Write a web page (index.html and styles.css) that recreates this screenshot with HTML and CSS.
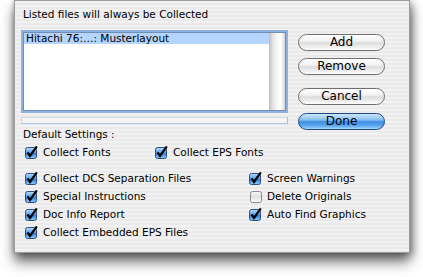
FILE: index.html
```html
<!DOCTYPE html>
<html>
<head>
<meta charset="utf-8">
<link rel="stylesheet" href="styles.css">
</head>
<body>
<div class="window">
  <div class="title">Listed files will always be Collected</div>
  <div class="main">
    <div class="left">
      <div class="list">
        <div class="rows">
          <div class="row selected">Hitachi 76:…: Musterlayout</div>
        </div>
        <div class="scroll"></div>
      </div>
      <div class="hbar"></div>
      <div class="heading">Default Settings :</div>
    </div>
    <div class="buttons">
      <div class="btn">Add</div>
      <div class="btn gap7">Remove</div>
      <div class="btn gap13">Cancel</div>
      <div class="btn default gap8">Done</div>
    </div>
  </div>
  <div class="row1">
    <label class="cb w130"><svg class="box" viewBox="0 0 13 13" width="13" height="13"><defs><linearGradient id="g1" x1="0" y1="0" x2="0" y2="1"><stop offset="0" stop-color="#b9dcfb"/><stop offset="0.45" stop-color="#5ba3ec"/><stop offset="0.55" stop-color="#2e7fd9"/><stop offset="1" stop-color="#8fd0fb"/></linearGradient></defs><rect x="0.5" y="1.5" width="11" height="11" rx="2" fill="url(#g1)" stroke="#2c4f80"/><path d="M2.6 6.4 L5 10 L11.8 0.4" fill="none" stroke="#000" stroke-width="2.2"/></svg>Collect Fonts</label>
    <label class="cb"><svg class="box" viewBox="0 0 13 13" width="13" height="13"><rect x="0.5" y="1.5" width="11" height="11" rx="2" fill="url(#g1)" stroke="#2c4f80"/><path d="M2.6 6.4 L5 10 L11.8 0.4" fill="none" stroke="#000" stroke-width="2.2"/></svg>Collect EPS Fonts</label>
  </div>
  <div class="grid">
    <label class="cb"><svg class="box" viewBox="0 0 13 13" width="13" height="13"><rect x="0.5" y="1.5" width="11" height="11" rx="2" fill="url(#g1)" stroke="#2c4f80"/><path d="M2.6 6.4 L5 10 L11.8 0.4" fill="none" stroke="#000" stroke-width="2.2"/></svg>Collect DCS Separation Files</label>
    <label class="cb"><svg class="box" viewBox="0 0 13 13" width="13" height="13"><rect x="0.5" y="1.5" width="11" height="11" rx="2" fill="url(#g1)" stroke="#2c4f80"/><path d="M2.6 6.4 L5 10 L11.8 0.4" fill="none" stroke="#000" stroke-width="2.2"/></svg>Screen Warnings</label>
    <label class="cb"><svg class="box" viewBox="0 0 13 13" width="13" height="13"><rect x="0.5" y="1.5" width="11" height="11" rx="2" fill="url(#g1)" stroke="#2c4f80"/><path d="M2.6 6.4 L5 10 L11.8 0.4" fill="none" stroke="#000" stroke-width="2.2"/></svg>Special Instructions</label>
    <label class="cb"><svg class="box" viewBox="0 0 13 13" width="13" height="13"><defs><linearGradient id="g2" x1="0" y1="0" x2="0" y2="1"><stop offset="0" stop-color="#f4f4f4"/><stop offset="0.5" stop-color="#e2e2e2"/><stop offset="1" stop-color="#ffffff"/></linearGradient></defs><rect x="1.5" y="1.5" width="11" height="11" rx="2" fill="url(#g2)" stroke="#8a8a8a"/></svg>Delete Originals</label>
    <label class="cb"><svg class="box" viewBox="0 0 13 13" width="13" height="13"><rect x="0.5" y="1.5" width="11" height="11" rx="2" fill="url(#g1)" stroke="#2c4f80"/><path d="M2.6 6.4 L5 10 L11.8 0.4" fill="none" stroke="#000" stroke-width="2.2"/></svg>Doc Info Report</label>
    <label class="cb"><svg class="box" viewBox="0 0 13 13" width="13" height="13"><rect x="0.5" y="1.5" width="11" height="11" rx="2" fill="url(#g1)" stroke="#2c4f80"/><path d="M2.6 6.4 L5 10 L11.8 0.4" fill="none" stroke="#000" stroke-width="2.2"/></svg>Auto Find Graphics</label>
    <label class="cb"><svg class="box" viewBox="0 0 13 13" width="13" height="13"><rect x="0.5" y="1.5" width="11" height="11" rx="2" fill="url(#g1)" stroke="#2c4f80"/><path d="M2.6 6.4 L5 10 L11.8 0.4" fill="none" stroke="#000" stroke-width="2.2"/></svg>Collect Embedded EPS Files</label>
  </div>
</div>
</body>
</html>
```
FILE: styles.css
```css
html, body {
  margin: 0;
  padding: 0;
  background: #ffffff;
}
body {
  font-family: "DejaVu Sans", sans-serif;
  font-size: 10.5px;
  color: #000;
  height: 277px;
  overflow: hidden;
}
.window {
  box-sizing: border-box;
  margin-left: 14px;
  width: 396px;
  height: 253px;
  border: 1px solid #9c9c9c;
  background: repeating-linear-gradient(#f2f2f2 0 2px, #eaeaea 2px 4px);
  box-shadow: 0 9px 12px rgba(0,0,0,0.55), 3px 2px 8px rgba(0,0,0,0.3), -1px 0 4px rgba(0,0,0,0.15);
  padding: 0 0 0 6px;
}
.title {
  height: 29px;
  box-sizing: border-box;
  padding: 7px 0 0 2px;
  line-height: 13px;
}
.main {
  display: flex;
}
.left {
  width: 267px;
}
.list {
  box-sizing: border-box;
  height: 83px;
  border: 2px solid #8fb3e0;
  box-shadow: inset 0 0 0 1px #6f8fb8;
  background: #fff;
  display: flex;
  padding: 1px;
}
.rows {
  flex: 1;
}
.row {
  height: 11px;
  line-height: 11px;
  padding-left: 2px;
}
.selected {
  background: #b5d5ff;
}
.scroll {
  width: 16px;
  background: linear-gradient(to right, #bdbdbd, #e6e6e6 25%, #fafafa 55%, #ffffff 75%, #d4d4d4);
}
.hbar {
  box-sizing: border-box;
  margin-top: 4px;
  height: 7px;
  border: 1px solid #d0d8e2;
  border-bottom-color: #a8c4e6;
  border-right-color: #b8b8b8;
  background: #f6f6f6;
}
.heading {
  height: 19px;
  line-height: 13px;
  padding: 4px 0 0 2px;
  box-sizing: border-box;
}
.buttons {
  margin-left: 10px;
  width: 87px;
  padding-top: 4px;
  display: flex;
  flex-direction: column;
}
.btn {
  box-sizing: border-box;
  height: 17px;
  border: 1px solid #6e6e6e;
  border-radius: 9px;
  background: linear-gradient(#ffffff, #f2f2f2 40%, #dcdcdc 52%, #f2f2f2 85%, #ffffff);
  font-size: 12px;
  line-height: 15px;
  text-align: center;
}
.gap7 { margin-top: 7px; }
.gap13 { margin-top: 13px; }
.gap8 { margin-top: 8px; }
.default {
  border-color: #1d4a86;
  background: linear-gradient(#cde6fc, #86c0f2 40%, #3d8de2 52%, #5fa9ef 80%, #a6dafc);
}
.row1 {
  display: flex;
  height: 18px;
  padding-left: 4px;
}
.grid {
  margin-top: 8px;
  padding-left: 4px;
  display: grid;
  grid-template-columns: 224px auto;
  grid-auto-rows: 18px;
}
.cb {
  display: flex;
  align-items: center;
  line-height: 13px;
}
.w130 {
  width: 130px;
}
.box {
  margin-right: 5px;
  flex: none;
}
```
